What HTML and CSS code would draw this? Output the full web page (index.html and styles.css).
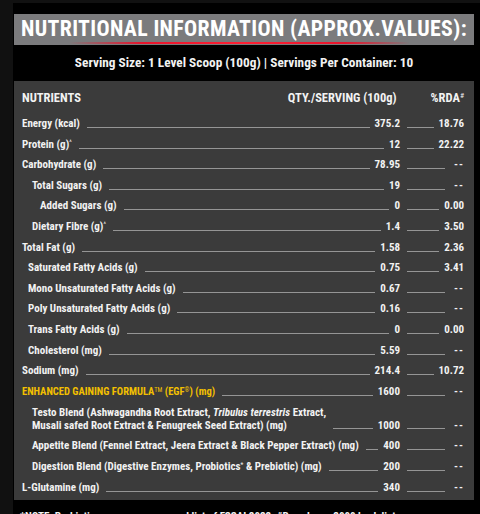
FILE: index.html
```html
<!DOCTYPE html>
<html>
<head>
    <title>Nutritional Information</title>
    <link rel="stylesheet" href="styles.css">
</head>
<body>
    <div class="page">
        <div class="title-bar">
            <h1>NUTRITIONAL INFORMATION (APPROX.VALUES):</h1>
        </div>
        <p class="serving">Serving Size: 1 Level Scoop (100g) | Servings Per Container: 10</p>

        <div class="panel">
            <div class="head-row">
                <span class="head-label">NUTRIENTS</span>
                <span class="head-qty">QTY./SERVING (100g)</span>
                <span class="head-rda">%RDA<sup>#</sup></span>
            </div>

            <div class="row">
                <span class="label">Energy (kcal)</span><span class="leader"></span>
                <span class="value">375.2</span>
                <span class="rda"><span class="leader"></span><span class="pct">18.76</span></span>
            </div>
            <div class="row">
                <span class="label">Protein (g)<sup>^</sup></span><span class="leader"></span>
                <span class="value">12</span>
                <span class="rda"><span class="leader"></span><span class="pct">22.22</span></span>
            </div>
            <div class="row">
                <span class="label">Carbohydrate (g)</span><span class="leader"></span>
                <span class="value">78.95</span>
                <span class="rda"><span class="leader"></span><span class="pct none">--</span></span>
            </div>
            <div class="row sub">
                <span class="label">Total Sugars (g)</span><span class="leader"></span>
                <span class="value">19</span>
                <span class="rda"><span class="leader"></span><span class="pct none">--</span></span>
            </div>
            <div class="row subsub">
                <span class="label">Added Sugars (g)</span><span class="leader"></span>
                <span class="value">0</span>
                <span class="rda"><span class="leader"></span><span class="pct">0.00</span></span>
            </div>
            <div class="row sub">
                <span class="label">Dietary Fibre (g)<sup>^</sup></span><span class="leader"></span>
                <span class="value">1.4</span>
                <span class="rda"><span class="leader"></span><span class="pct">3.50</span></span>
            </div>
            <div class="row">
                <span class="label">Total Fat (g)</span><span class="leader"></span>
                <span class="value">1.58</span>
                <span class="rda"><span class="leader"></span><span class="pct">2.36</span></span>
            </div>
            <div class="row fat">
                <span class="label">Saturated Fatty Acids (g)</span><span class="leader"></span>
                <span class="value">0.75</span>
                <span class="rda"><span class="leader"></span><span class="pct">3.41</span></span>
            </div>
            <div class="row fat">
                <span class="label">Mono Unsaturated Fatty Acids (g)</span><span class="leader"></span>
                <span class="value">0.67</span>
                <span class="rda"><span class="leader"></span><span class="pct none">--</span></span>
            </div>
            <div class="row fat">
                <span class="label">Poly Unsaturated Fatty Acids (g)</span><span class="leader"></span>
                <span class="value">0.16</span>
                <span class="rda"><span class="leader"></span><span class="pct none">--</span></span>
            </div>
            <div class="row fat">
                <span class="label">Trans Fatty Acids (g)</span><span class="leader"></span>
                <span class="value">0</span>
                <span class="rda"><span class="leader"></span><span class="pct">0.00</span></span>
            </div>
            <div class="row fat">
                <span class="label">Cholesterol (mg)</span><span class="leader"></span>
                <span class="value">5.59</span>
                <span class="rda"><span class="leader"></span><span class="pct none">--</span></span>
            </div>
            <div class="row">
                <span class="label">Sodium (mg)</span><span class="leader"></span>
                <span class="value">214.4</span>
                <span class="rda"><span class="leader"></span><span class="pct">10.72</span></span>
            </div>
            <div class="row egf">
                <span class="label">ENHANCED GAINING FORMULA<sup>TM</sup> (EGF<sup>®</sup>) (mg)</span><span class="leader"></span>
                <span class="value">1600</span>
                <span class="rda"><span class="leader"></span><span class="pct none">--</span></span>
            </div>
            <div class="row sub blend">
                <span class="label">Testo Blend (Ashwagandha Root Extract, <em>Tribulus terrestris</em> Extract,<br>Musali safed Root Extract &amp; Fenugreek Seed Extract) (mg)</span><span class="leader"></span>
                <span class="value">1000</span>
                <span class="rda"><span class="leader"></span><span class="pct none">--</span></span>
            </div>
            <div class="row sub">
                <span class="label">Appetite Blend (Fennel Extract, Jeera Extract &amp; Black Pepper Extract) (mg)</span><span class="leader"></span>
                <span class="value">400</span>
                <span class="rda"><span class="leader"></span><span class="pct none">--</span></span>
            </div>
            <div class="row sub">
                <span class="label">Digestion Blend (Digestive Enzymes, Probiotics<sup>*</sup> &amp; Prebiotic) (mg)</span><span class="leader"></span>
                <span class="value">200</span>
                <span class="rda"><span class="leader"></span><span class="pct none">--</span></span>
            </div>
            <div class="row">
                <span class="label">L-Glutamine (mg)</span><span class="leader"></span>
                <span class="value">340</span>
                <span class="rda"><span class="leader"></span><span class="pct none">--</span></span>
            </div>
        </div>

        <p class="note">*NOTE: Probiotics are as per approved list of FSSAI 2022. #Based on a 2000 kcal diet.</p>
    </div>
</body>
</html>
```
FILE: styles.css
```css
body {
    margin: 0;
    background-color: #111;
    font-family: Roboto, "DejaVu Sans", sans-serif;
    font-stretch: condensed;
    color: #f2f2f2;
    overflow: hidden;
}

.page {
    margin: 3px 0 0 13px;
    padding: 11px 6px 0 1px;
    background-color: #000;
    height: 500px;
}

/* title */
.title-bar {
    height: 31px;
    background-color: #7b7b7d;
    background-image: linear-gradient(90deg, rgba(230, 20, 40, 0) 12%, #e8142c 28%, #ff1f33 50%, #e8142c 72%, rgba(230, 20, 40, 0) 86%);
    background-size: 100% 2px;
    background-position: bottom 1px left 0;
    background-repeat: no-repeat;
    display: flex;
    align-items: center;
    justify-content: center;
}

.title-bar h1 {
    margin: 0 0 2px;
    font-size: 21.8px;
    font-weight: bold;
    color: #fff;
    letter-spacing: 0.35px;
    white-space: nowrap;
}

.serving {
    margin: 0;
    height: 36px;
    line-height: 36px;
    text-align: center;
    font-size: 13.3px;
    font-weight: bold;
}

/* table panel */
.panel {
    background-color: #3b3b3b;
    padding: 0 10px 2px 8px;
    font-size: 11px;
    font-weight: bold;
}

.head-row {
    height: 33px;
    display: flex;
    align-items: center;
    font-size: 12.5px;
}

.head-label {
    flex: 1;
}

.head-qty {
    margin-right: 34px;
}

sup {
    font-size: 60%;
    line-height: 0;
    vertical-align: 0.5em;
    font-weight: normal;
}

.row {
    display: flex;
    align-items: flex-end;
    padding: 3px 0;
    line-height: 14.6px;
    white-space: nowrap;
}

.row .label {
    padding-right: 7px;
}

.leader {
    flex: 1;
    height: 0;
    border-bottom: 1.5px solid #959595;
    margin-bottom: 3.5px;
    min-width: 6px;
}

.value {
    padding-left: 5px;
}

.rda {
    width: 57px;
    margin-left: 7px;
    display: flex;
    align-items: flex-end;
}

.pct {
    padding-left: 5px;
}

.pct.none {
    padding-left: 9px;
    letter-spacing: 1px;
}

.row.sub {
    padding-left: 10px;
}

.row.subsub {
    padding-left: 18px;
}

.row.fat {
    padding-left: 6px;
}

.row.egf .label {
    color: #f3c000;
    font-size: 10.5px;
}

.row.blend {
    padding: 4px 0 4px 10px;
    line-height: 13px;
}

.row.blend em {
    font-style: italic;
}

.note {
    margin: 10px 0 0 6px;
    font-size: 11px;
    font-weight: bold;
    white-space: nowrap;
}
```
